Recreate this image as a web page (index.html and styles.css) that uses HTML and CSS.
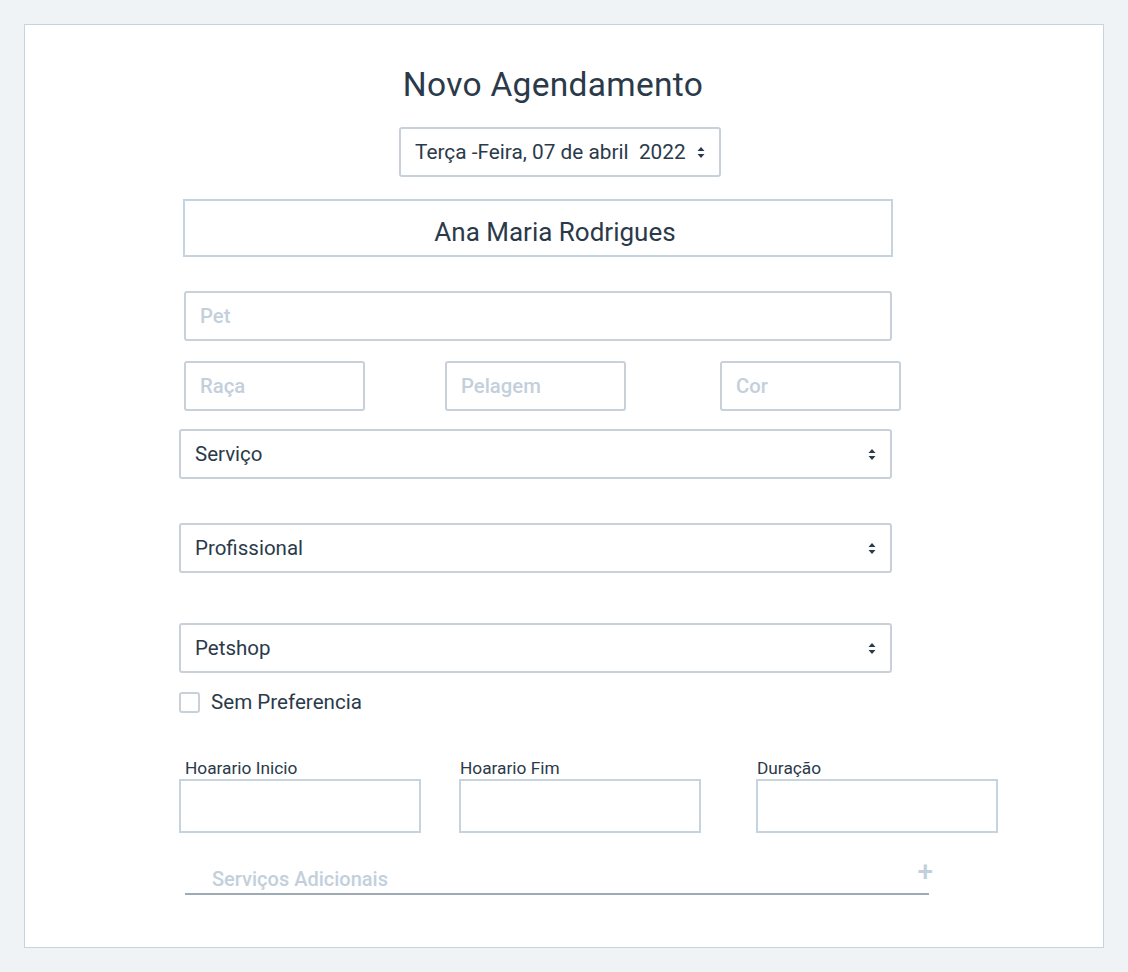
FILE: index.html
```html
<!DOCTYPE html>
<html lang="pt">
<head>
<meta charset="utf-8">
<title>Novo Agendamento</title>
<link rel="stylesheet" href="styles.css">
</head>
<body>
<div class="card">
  <h1 class="title">Novo Agendamento</h1>
  <div class="date-select">
    <span>Terça -Feira, 07 de abril&nbsp; 2022</span>
    <svg class="arrows" width="8" height="11" viewBox="0 0 8 11"><path d="M4 0 L7.5 4 L0.5 4 Z M4 11 L7.5 7 L0.5 7 Z" fill="#2b3a4a"/></svg>
  </div>
  <div class="form">
    <div class="client">Ana Maria Rodrigues</div>
    <div class="field pet"><span class="ph">Pet</span></div>
    <div class="row3">
      <div class="field small f1"><span class="ph">Raça</span></div>
      <div class="field small f2"><span class="ph">Pelagem</span></div>
      <div class="field small f3"><span class="ph">Cor</span></div>
    </div>
    <div class="select s-servico"><span>Serviço</span><svg class="arrows" width="8" height="11" viewBox="0 0 8 11"><path d="M4 0 L7.5 4 L0.5 4 Z M4 11 L7.5 7 L0.5 7 Z" fill="#2b3a4a"/></svg></div>
    <div class="select s-prof"><span>Profissional</span><svg class="arrows" width="8" height="11" viewBox="0 0 8 11"><path d="M4 0 L7.5 4 L0.5 4 Z M4 11 L7.5 7 L0.5 7 Z" fill="#2b3a4a"/></svg></div>
    <div class="select s-petshop"><span>Petshop</span><svg class="arrows" width="8" height="11" viewBox="0 0 8 11"><path d="M4 0 L7.5 4 L0.5 4 Z M4 11 L7.5 7 L0.5 7 Z" fill="#2b3a4a"/></svg></div>
    <label class="check"><span class="box"></span><span>Sem Preferencia</span></label>
    <div class="times">
      <div class="time t1"><div class="lbl">Hoarario Inicio</div><div class="tbox"></div></div>
      <div class="time t2"><div class="lbl">Hoarario Fim</div><div class="tbox"></div></div>
      <div class="time t3"><div class="lbl">Duração</div><div class="tbox"></div></div>
    </div>
    <div class="extras">
      <span class="extras-text">Serviços Adicionais</span>
      <span class="plus">+</span>
    </div>
  </div>
</div>
</body>
</html>
```
FILE: styles.css
```css
* { box-sizing: border-box; }
html, body { margin: 0; }
body {
  background: #eff3f6;
  padding: 24px;
  font-family: Roboto, "Noto Sans", sans-serif;
  color: #2b3a4a;
}
.card {
  background: #fff;
  border: 1px solid #c6d4df;
  height: 924px;
  display: flex;
  flex-direction: column;
  align-items: center;
}
.title {
  margin: 42px 22px 0 0;
  font-size: 33.5px;
  line-height: 36px;
  font-weight: 400;
  letter-spacing: 0.3px;
}
.date-select {
  margin: 24px 8px 0 0;
  width: 322px;
  height: 50px;
  border: 2px solid #c8d1da;
  border-radius: 3px;
  display: flex;
  align-items: center;
  justify-content: space-between;
  padding: 0 14px 0 14px;
  font-size: 20.8px;
}
.form {
  align-self: flex-start;
  margin-left: 154px;
  width: 820px;
  display: flex;
  flex-direction: column;
}
.client {
  margin-top: 22px;
  margin-left: 4px;
  width: 710px;
  height: 58px;
  border: 2px solid #c6d4df;
  display: flex;
  align-items: center;
  justify-content: center;
  font-size: 26px;
  padding-top: 8px;
  padding-left: 34px;
}
.field {
  height: 50px;
  border: 2px solid #c8d1da;
  border-radius: 3px;
  display: flex;
  align-items: center;
  padding-left: 14px;
  font-size: 20.3px;
}
.ph { color: #c3d0dc; font-weight: 500; }
.pet { margin-top: 34px; margin-left: 5px; width: 708px; }
.row3 { display: flex; margin-top: 20px; }
.small { width: 181px; }
.f1 { margin-left: 5px; }
.f2 { margin-left: 80px; }
.f3 { margin-left: 94px; }
.select {
  width: 713px;
  height: 50px;
  border: 2px solid #c8d1da;
  border-radius: 3px;
  display: flex;
  align-items: center;
  justify-content: space-between;
  padding: 0 14px 0 14px;
  font-size: 20.5px;
}
.s-servico { margin-top: 18px; }
.s-prof { margin-top: 44px; }
.s-petshop { margin-top: 50px; }
.check {
  margin-top: 17px;
  display: flex;
  align-items: center;
  gap: 11px;
  font-size: 20.6px;
}
.box {
  width: 21px;
  height: 21px;
  border: 2px solid #c8d1da;
  border-radius: 3px;
}
.times { display: flex; margin-top: 44px; }
.time { display: flex; flex-direction: column; }
.lbl { font-size: 17.3px; line-height: 20px; height: 21px; }
.t1 .lbl { padding-left: 6px; }
.t2 .lbl, .t3 .lbl { padding-left: 1px; }
.t2 { margin-left: 38px; }
.t3 { margin-left: 55px; }
.tbox {
  width: 242px;
  height: 54px;
  border: 2px solid #c6d4df;
}
.extras {
  margin-top: 28px;
  margin-left: 6px;
  width: 744px;
  height: 34px;
  border-bottom: 2px solid #9eabb7;
  display: flex;
  justify-content: space-between;
  align-items: flex-start;
  padding-left: 27px;
  padding-right: 0;
}
.extras-text {
  color: #c3d0dc;
  font-weight: 500;
  font-size: 20px;
  margin-top: 6px;
}
.plus {
  color: #c3d0dc;
  font-size: 28px;
  line-height: 24px;
  font-weight: 500;
  margin-right: -4px;
  margin-top: -1px;
}
```
